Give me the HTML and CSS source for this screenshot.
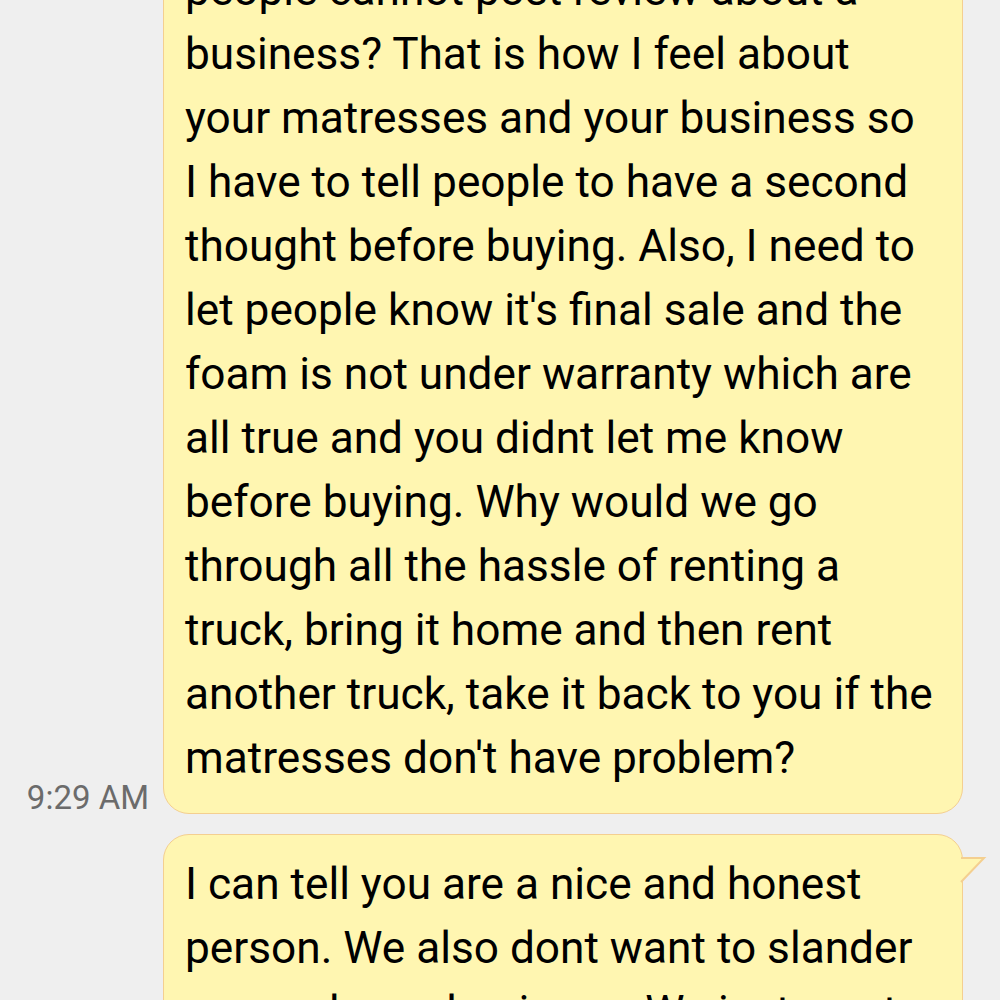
FILE: index.html
```html
<!DOCTYPE html>
<html lang="en">
<head>
    <meta charset="UTF-8">
    <meta name="viewport" content="width=device-width, initial-scale=1.0">
    <title>Messages</title>
    <link rel="stylesheet" href="styles.css">
</head>
<body>
    <div class="thread">
        <div class="message-row">
            <div class="time">9:29 AM</div>
            <div class="bubble">
                people cannot post review about a business? That is how I feel about your matresses and your business so I have to tell people to have a second thought before buying. Also, I need to let people know it's final sale and the foam is not under warranty which are all true and you didnt let me know before buying. Why would we go through all the hassle of renting a truck, bring it home and then rent another truck, take it back to you if the matresses don't have problem?
            </div>
        </div>

        <div class="message-row">
            <div class="time"></div>
            <div class="bubble bubble-tail">
                I can tell you are a nice and honest person. We also dont want to slander you and your business. We just want to warn people.
                <svg class="tail" width="28" height="28" viewBox="0 0 28 28">
                    <polygon points="0,1 25,1 2,25 0,25" fill="#fff6b1"/>
                    <polyline points="2,1 25,1 2,25" fill="none" stroke="#f4cf90" stroke-width="2" stroke-linejoin="miter"/>
                </svg>
            </div>
        </div>
    </div>
</body>
</html>
```

FILE: styles.css
```css
body {
    margin: 0;
    height: 1000px;
    overflow: hidden;
    background-color: #efefef;
    font-family: Roboto, "Noto Sans", Arial, sans-serif;
}

.thread {
    margin-top: -60px;
    display: flex;
    flex-direction: column;
    gap: 20px;
}

.message-row {
    display: grid;
    grid-template-columns: 163px 800px;
    align-items: end;
}

.time {
    justify-self: end;
    padding-right: 14px;
    font-size: 33px;
    line-height: 32px;
    color: #6b6b6b;
}

.bubble {
    position: relative;
    box-sizing: border-box;
    padding: 17px 26px 23px 21px;
    background: #fff6b1;
    border: 1.5px solid #f4cf90;
    border-radius: 26px;
    font-size: 44.2px;
    line-height: 64px;
    color: #000;
}

.bubble-tail .tail {
    position: absolute;
    right: -25px;
    top: 22px;
}
```
